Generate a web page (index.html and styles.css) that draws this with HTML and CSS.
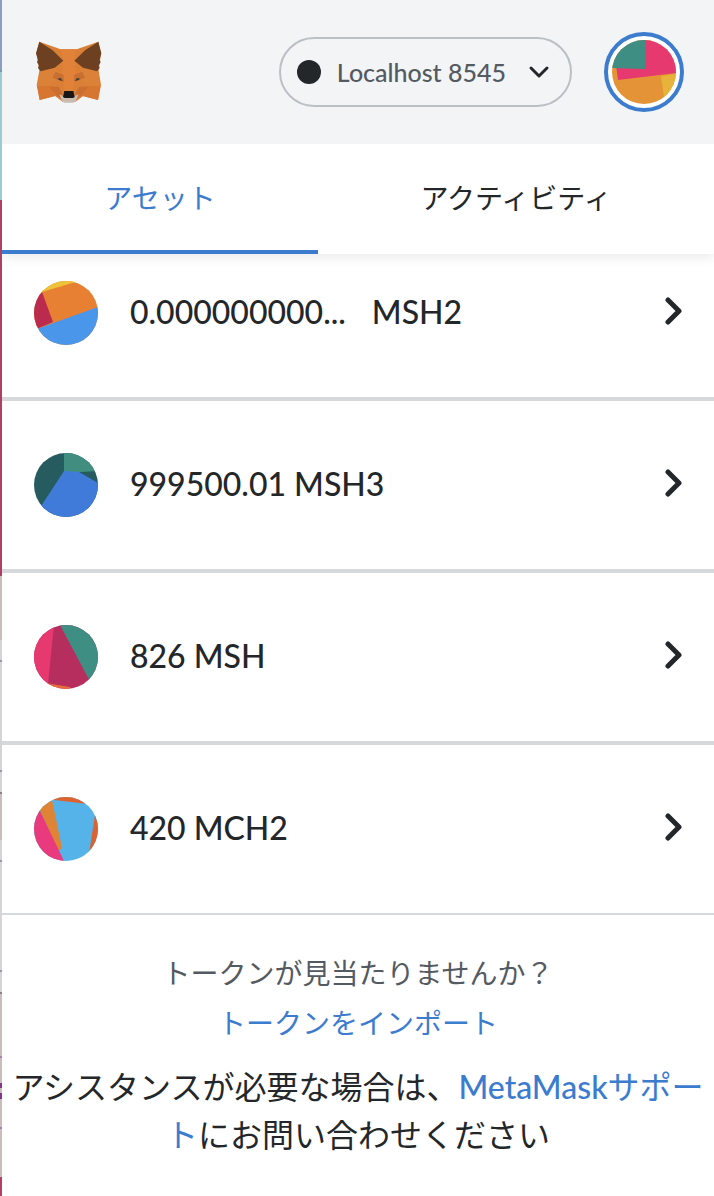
FILE: index.html
```html
<!DOCTYPE html>
<html lang="ja">
<head>
<meta charset="utf-8">
<meta name="viewport" content="width=device-width, initial-scale=1">
<title>MetaMask</title>
<link rel="stylesheet" href="styles.css">
</head>
<body>
<div class="edge" aria-hidden="true"></div>
<div class="wallet">
  <header class="header">
    <svg class="fox" viewBox="48 33 198 186" role="img" aria-label="MetaMask">
      <path fill="#d97f36" d="M58 35L122 58H170L235 35L243 70L236 122L243 165L234 210L190 198L166 215H128L105 198L59 210L50 166L58 122L49 70Z"/>
      <path fill="#dc8238" d="M60 122L104 113L125 130L92 168H52ZM233 122L189 113L168 130L200 168H241Z"/>
      <path fill="#e28239" d="M122 58H170L163 90L168 130L158 184H134L125 130L129 90Z"/>
      <path fill="#d67630" d="M52 168H92L105 198L59 210ZM241 168H200L188 198L234 210Z"/>
      <path fill="#c96f31" d="M107 125L97 143L132 156L130 134ZM186 125L196 143L161 156L163 134Z"/>
      <path fill="#cb6e31" d="M88 170L116 170L126 188L120 203L108 196ZM204 170L178 170L167 188L172 203L186 196Z"/>
      <path fill="#6e4022" d="M58 35L98 61L130 92L104 113L62 124L54 114L57 106L51 97L54 89L48 70ZM235 35L195 61L163 92L189 113L231 124L239 114L236 106L242 97L239 89L244 70Z"/>
      <path fill="#c9bcae" d="M118 193L130 199H162L176 193L167 213L160 218H133L126 213Z"/>
      <path fill="#3a3f3c" d="M112 146L122 144L128 153L119 151ZM181 146L171 144L165 153L174 151Z"/>
      <path fill="#17171a" d="M133 183H160L164 201L159 204H134L129 201Z"/>
    </svg>
    <div class="header-actions">
      <button class="network" type="button">
        <span class="network-dot"></span>
        <span class="network-name">Localhost 8545</span>
        <svg class="network-arrow" viewBox="0 0 22 14" aria-hidden="true"><path d="M3 3L11 11L19 3"/></svg>
      </button>
      <button class="account" type="button" aria-label="アカウント">
        <svg class="avatar" viewBox="0 0 64 64" aria-hidden="true">
          <path fill="#e49337" d="M0 0H64V64H0Z"/>
          <path fill="#e8b33b" d="M49 36L64 34V64H53Z"/>
          <path fill="#e63970" d="M4 25L32 0H64V33L6 40Z"/>
          <path fill="#3f8e84" d="M0 0H34L33 29L0 28Z"/>
        </svg>
      </button>
    </div>
  </header>

  <nav class="tabs">
    <button class="tab tab-active" type="button">アセット</button>
    <button class="tab" type="button">アクティビティ</button>
  </nav>

  <main>
    <ul class="tokens">
      <li class="token-item">
        <button class="token" type="button">
          <svg class="avatar" viewBox="0 0 64 64" aria-hidden="true">
            <path fill="#e88033" d="M0 0H64V64H0Z"/>
            <path fill="#efc337" d="M0 0H48L38 2L8 11Z"/>
            <path fill="#ba2b4e" d="M0 0L8 11L19 41L0 49Z"/>
            <path fill="#4996ea" d="M0 49L64 26V64H0Z"/>
          </svg>
          <span class="amount">0.000000000...</span>
          <span class="symbol symbol-apart">MSH2</span>
          <svg class="arrow" viewBox="0 0 18 28" aria-hidden="true"><path d="M4 3L15 14L4 25"/></svg>
        </button>
      </li>
      <li class="token-item">
        <button class="token" type="button">
          <svg class="avatar" viewBox="0 0 64 64" aria-hidden="true">
            <path fill="#265b60" d="M0 0H64V64H0Z"/>
            <path fill="#3f8e80" d="M30 0H64V18L30 20Z"/>
            <path fill="#407bda" d="M30 18L45 19L64 30V64H0Z"/>
          </svg>
          <span class="amount">999500.01</span>
          <span class="symbol">MSH3</span>
          <svg class="arrow" viewBox="0 0 18 28" aria-hidden="true"><path d="M4 3L15 14L4 25"/></svg>
        </button>
      </li>
      <li class="token-item">
        <button class="token" type="button">
          <svg class="avatar" viewBox="0 0 64 64" aria-hidden="true">
            <path fill="#b62e5d" d="M0 0H64V64H0Z"/>
            <path fill="#e63970" d="M0 0H20L14 59L0 64Z"/>
            <path fill="#3f8e84" d="M26 0H64V64H60Z"/>
            <path fill="#e66a3b" d="M12 58L36 62V64H12Z"/>
          </svg>
          <span class="amount">826</span>
          <span class="symbol">MSH</span>
          <svg class="arrow" viewBox="0 0 18 28" aria-hidden="true"><path d="M4 3L15 14L4 25"/></svg>
        </button>
      </li>
      <li class="token-item">
        <button class="token" type="button">
          <svg class="avatar" viewBox="0 0 64 64" aria-hidden="true">
            <path fill="#56b3ea" d="M0 0H64V64H0Z"/>
            <path fill="#dc622f" d="M18 0H60L54 7L20 3ZM61 18L55 57L64 64V18Z"/>
            <path fill="#df8434" d="M0 0L18 3L28 51L24 54Z"/>
            <path fill="#e83a7d" d="M0 0L6 14L30 64H0Z"/>
          </svg>
          <span class="amount">420</span>
          <span class="symbol">MCH2</span>
          <svg class="arrow" viewBox="0 0 18 28" aria-hidden="true"><path d="M4 3L15 14L4 25"/></svg>
        </button>
      </li>
    </ul>
    <section class="import">
      <p class="import-question">トークンが見当たりませんか？</p>
      <a class="link" href="#import">トークンをインポート</a>
    </section>
  </main>
  <footer class="support">アシスタンスが必要な場合は、<a class="link" href="#support"><span class="brand">MetaMask</span>サポート</a>にお問い合わせください</footer>
</div>
</body>
</html>
```
FILE: styles.css
```css
* {
  box-sizing: border-box;
}

body {
  margin: 0;
  min-height: 100vh;
  display: grid;
  grid-template-columns: 2px minmax(0, 1fr);
  background: #fff;
  color: #24272a;
  font-family: Lato, "Noto Sans CJK JP", sans-serif;
}

button {
  margin: 0;
  padding: 0;
  border: 0;
  background: none;
  color: inherit;
  font: inherit;
  cursor: pointer;
}

.edge {
  background: linear-gradient(
    #8d9dbd 0 70px, #7c9aa5 70px 72px, #9accd0 72px 200px,
    #ae4162 200px 576px, #cdbcbe 576px 640px,
    #d5d5d7 640px 660px, #9a9a9e 660px 662px, #d5d5d7 662px 770px,
    #9a9a9e 770px 772px, #d5d5d7 772px 792px, #8b8286 792px 794px,
    #cdbcbe 794px 840px, #d5d5d7 840px 860px, #9a9a9e 860px 862px,
    #d5d5d7 862px 970px, #9a9a9e 970px 972px, #d5d5d7 972px 992px,
    #8b8286 992px 994px, #cdbcbe 994px 1056px, #a585aa 1056px 1058px,
    #cdbcbe 1058px 1083px, #86358f 1083px 1088px, #cdbcbe 1088px 1093px,
    #86358f 1093px 1099px, #cdbcbe 1099px 1127px, #a585aa 1127px 1129px,
    #cdbcbe 1129px 1177px, #b53e64 1177px
  );
}

.header {
  display: flex;
  align-items: center;
  justify-content: space-between;
  padding: 32px 30px 32px 34px;
  background: #f2f4f6;
}

.fox {
  width: 66px;
  height: 62px;
}

.header-actions {
  display: flex;
  align-items: center;
  gap: 32px;
}

.network {
  display: flex;
  align-items: center;
  height: 70px;
  padding: 0 20px 0 16px;
  border: 2px solid #bbc0c5;
  border-radius: 35px;
  color: #535a61;
  font-size: 25px;
  font-weight: 500;
}

.network-dot {
  width: 24px;
  height: 24px;
  margin-right: 16px;
  border-radius: 50%;
  background: #24272a;
}

.network-arrow {
  width: 22px;
  height: 14px;
  margin-left: 22px;
  fill: none;
  stroke: #24272a;
  stroke-width: 3;
  stroke-linecap: round;
  stroke-linejoin: round;
}

.account {
  display: flex;
  padding: 4px;
  border: 4px solid #3c7ccf;
  border-radius: 50%;
  background: #fff;
}

.avatar {
  flex: none;
  width: 64px;
  height: 64px;
  border-radius: 50%;
}

.tabs {
  display: flex;
  box-shadow: 0 2px 12px rgba(0, 0, 0, 0.1);
  clip-path: inset(0 0 -24px 0);
}

.tab {
  flex: 1 1 auto;
  height: 110px;
  border-bottom: 4px solid transparent;
  font-size: 28px;
}

.tab-active {
  border-color: #3c7ccf;
  color: #3c7ccf;
}

.tokens {
  margin: 0;
  padding: 0;
  list-style: none;
}

.token-item {
  border-bottom: 4px solid #d6d9dc;
}

.token-item:last-child {
  border-bottom-width: 2px;
}

.token {
  display: flex;
  align-items: center;
  width: 100%;
  padding: 50px 32px 54px;
  font-size: 32px;
  font-weight: 500;
  text-align: left;
}

.token .avatar {
  margin: 2px 0 -2px;
}

.token-item:first-child .token {
  padding-top: 25px;
}

.amount {
  margin-left: 32px;
}

.symbol {
  margin-left: 8px;
}

.symbol-apart {
  margin-left: 26px;
}

.arrow {
  width: 18px;
  height: 28px;
  margin-left: auto;
  fill: none;
  stroke: #24272a;
  stroke-width: 5;
  stroke-linecap: round;
  stroke-linejoin: round;
}

.link {
  color: #3c7ccf;
  text-decoration: none;
}

.import {
  display: flex;
  flex-direction: column;
  align-items: center;
  gap: 10px;
  padding-top: 38px;
  font-size: 28px;
  line-height: 40px;
}

.import-question {
  margin: 0;
  color: #535a61;
}

.support {
  padding: 20px 0 36px;
  font-size: 32px;
  line-height: 48px;
  text-align: center;
}

.brand {
  font-weight: 500;
}
```
